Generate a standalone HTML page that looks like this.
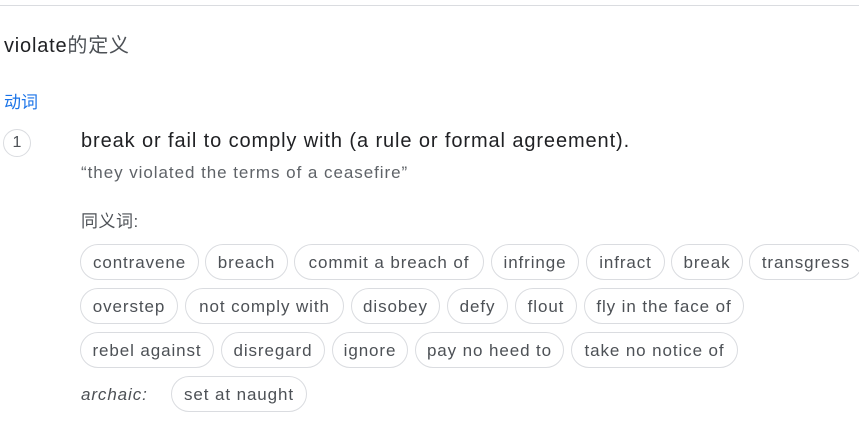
<!DOCTYPE html>
<html><head><meta charset="utf-8"><style>
body{margin:0;width:859px;height:431px;background:#fff;position:relative;overflow:hidden;font-family:"Liberation Sans","Noto Sans CJK SC",sans-serif}
.a{position:absolute;white-space:nowrap}
.c{position:absolute;height:34px;border:1px solid #dadce0;border-radius:18px;color:#4d5156;font-size:17px;letter-spacing:0.9px;line-height:36px;text-align:center;white-space:nowrap;box-sizing:content-box;overflow:hidden}
</style></head><body>
<div class="a" style="left:0;top:5px;width:859px;height:1px;background:#dadce0"></div>
<div class="a" style="left:4px;top:29px;font-size:20px;letter-spacing:0.8px;color:#202124">violate<span style="color:#4d5156">的定义</span></div>
<div class="a" style="left:4px;top:88px;font-size:17px;color:#1a73e8">动词</div>
<div class="a" style="left:3px;top:129px;width:26px;height:26px;border:1px solid #dadce0;border-radius:50%;text-align:center;line-height:26px;font-size:16px;color:#4d5156">1</div>
<div class="a" style="left:81px;top:130px;font-size:20px;letter-spacing:0.9px;color:#202124">break or fail to comply with (a rule or formal agreement).</div>
<div class="a" style="left:81px;top:163px;font-size:17px;letter-spacing:0.95px;color:#5f6368">“they violated the terms of a ceasefire”</div>
<div class="a" style="left:81px;top:207px;font-size:17px;letter-spacing:0.5px;color:#4d5156">同义词:</div>
<div class="c" style="left:80px;top:244px;width:117px">contravene</div>
<div class="c" style="left:205px;top:244px;width:81px">breach</div>
<div class="c" style="left:294px;top:244px;width:188px">commit a breach of</div>
<div class="c" style="left:491px;top:244px;width:86px">infringe</div>
<div class="c" style="left:586px;top:244px;width:77px">infract</div>
<div class="c" style="left:671px;top:244px;width:70px">break</div>
<div class="c" style="left:749px;top:244px;width:112px">transgress</div>
<div class="c" style="left:80px;top:288px;width:96px">overstep</div>
<div class="c" style="left:185px;top:288px;width:157px">not comply with</div>
<div class="c" style="left:351px;top:288px;width:87px">disobey</div>
<div class="c" style="left:447px;top:288px;width:59px">defy</div>
<div class="c" style="left:515px;top:288px;width:60px">flout</div>
<div class="c" style="left:584px;top:288px;width:158px">fly in the face of</div>
<div class="c" style="left:80px;top:332px;width:132px">rebel against</div>
<div class="c" style="left:221px;top:332px;width:102px">disregard</div>
<div class="c" style="left:332px;top:332px;width:74px">ignore</div>
<div class="c" style="left:415px;top:332px;width:147px">pay no heed to</div>
<div class="c" style="left:571px;top:332px;width:165px">take no notice of</div>
<div class="a" style="left:81px;top:385px;font-size:17px;letter-spacing:0.9px;font-style:italic;color:#4d5156">archaic:</div>
<div class="c" style="left:171px;top:376px;width:134px">set at naught</div>
</body></html>
